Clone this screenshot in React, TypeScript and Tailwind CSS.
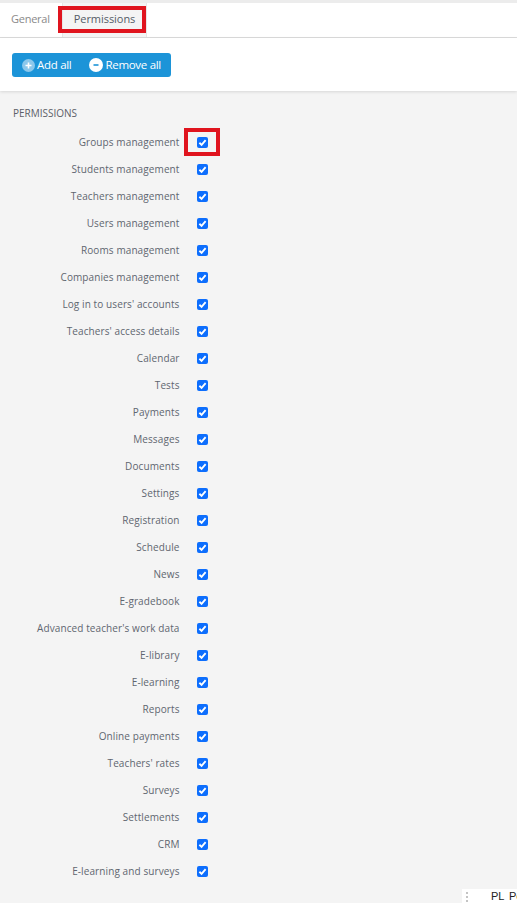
const items = [
  "Groups management","Students management","Teachers management","Users management","Rooms management","Companies management","Log in to users' accounts","Teachers' access details","Calendar","Tests","Payments","Messages","Documents","Settings","Registration","Schedule","News","E-gradebook","Advanced teacher's work data","E-library","E-learning","Reports","Online payments","Teachers' rates","Surveys","Settlements","CRM","E-learning and surveys",
];

function Check() {
  return (
    <span className="flex h-[11px] w-[11px] items-center justify-center rounded-[2px] bg-[#0d6efd]">
      <svg viewBox="0 0 12 12" className="h-[11px] w-[11px]" fill="none" stroke="#fff" strokeWidth="2">
        <path d="M2.6 6.3 5 8.6 9.4 3.4" />
      </svg>
    </span>
  );
}

export default function App() {
  return (
    <div className="relative h-[903px] w-[517px] overflow-hidden bg-[#f4f4f4] font-['Open_Sans',sans-serif]">
      <div className="h-[3px] bg-[#ececec]" />
      <div className="flex h-[35px] border-b border-[#dcdcdc] bg-white">
        <div className="flex w-[62px] items-center pb-[2px] pl-[11px] text-[11px] tracking-[-0.25px] text-[#8a8a8a]">General</div>
        <div className="relative flex w-[85px] items-center justify-center border-x border-[#e6e6e6] bg-[#f4f4f4] pb-[2px] text-[11px] tracking-[-0.05px] text-[#555c66]">
          Permissions
          <div className="absolute left-[-5px] top-[3px] h-[27px] w-[88px] border-[4px] border-[#e0141e]" />
        </div>
      </div>
      <div className="h-[53px] bg-white pl-[12px] pt-[15px] shadow-[0_1px_3px_rgba(0,0,0,0.12)]">
        <div className="flex h-[24px] w-[159px] items-center rounded-[3px] bg-[#1c94d8] text-[11.5px] tracking-[-0.3px] text-white">
          <span className="ml-[10px] flex h-[13px] w-[13px] items-center justify-center rounded-full bg-[#8cc8ec]">
            <svg viewBox="0 0 13 13" className="h-[13px] w-[13px]" stroke="#fff" strokeWidth="1.6"><path d="M3.5 6.5h6M6.5 3.5v6" /></svg>
          </span>
          <span className="ml-[2px]">Add all</span>
          <span className="ml-[18px] flex h-[14px] w-[14px] items-center justify-center rounded-full bg-white">
            <svg viewBox="0 0 14 14" className="h-[14px] w-[14px]" stroke="#1c94d8" strokeWidth="1.6"><path d="M4.5 7h5" /></svg>
          </span>
          <span className="ml-[2px]">Remove all</span>
        </div>
      </div>
      <div className="pl-[13px] pt-[15px] text-[10px] leading-[14px] text-[#5c6068]">PERMISSIONS</div>
      <div className="flex flex-col pt-[9px]">
        {items.map((label, i) => (
          <div key={label} className="flex h-[27px] items-center">
            <div className="w-[179.5px] text-right text-[10px] tracking-[0.1px] text-[#5f6670]">{label}</div>
            <div className="relative ml-[17.5px]">
              <Check />
              {i === 0 && <div className="absolute left-[-13px] top-[-9px] h-[28px] w-[36px] border-[4px] border-[#e0141e]" />}
            </div>
          </div>
        ))}
      </div>
      <div className="absolute bottom-0 left-[462px] flex h-[14px] w-[55px] items-start overflow-hidden bg-white">
        <div className="ml-[4px] mt-[3px] flex flex-col gap-[2px]">
          <span className="h-[2px] w-[2px] bg-[#c4c4c4]" />
          <span className="h-[2px] w-[2px] bg-[#c4c4c4]" />
          <span className="h-[2px] w-[2px] bg-[#c4c4c4]" />
        </div>
        <span className="ml-[23px] shrink-0 whitespace-nowrap font-['Liberation_Sans',sans-serif] text-[11px] leading-[14px] text-[#222]">PL</span>
        <span className="ml-[4.5px] shrink-0 whitespace-nowrap font-['Liberation_Sans',sans-serif] text-[11px] leading-[14px] text-[#222]">Po</span>
      </div>
    </div>
  );
}
